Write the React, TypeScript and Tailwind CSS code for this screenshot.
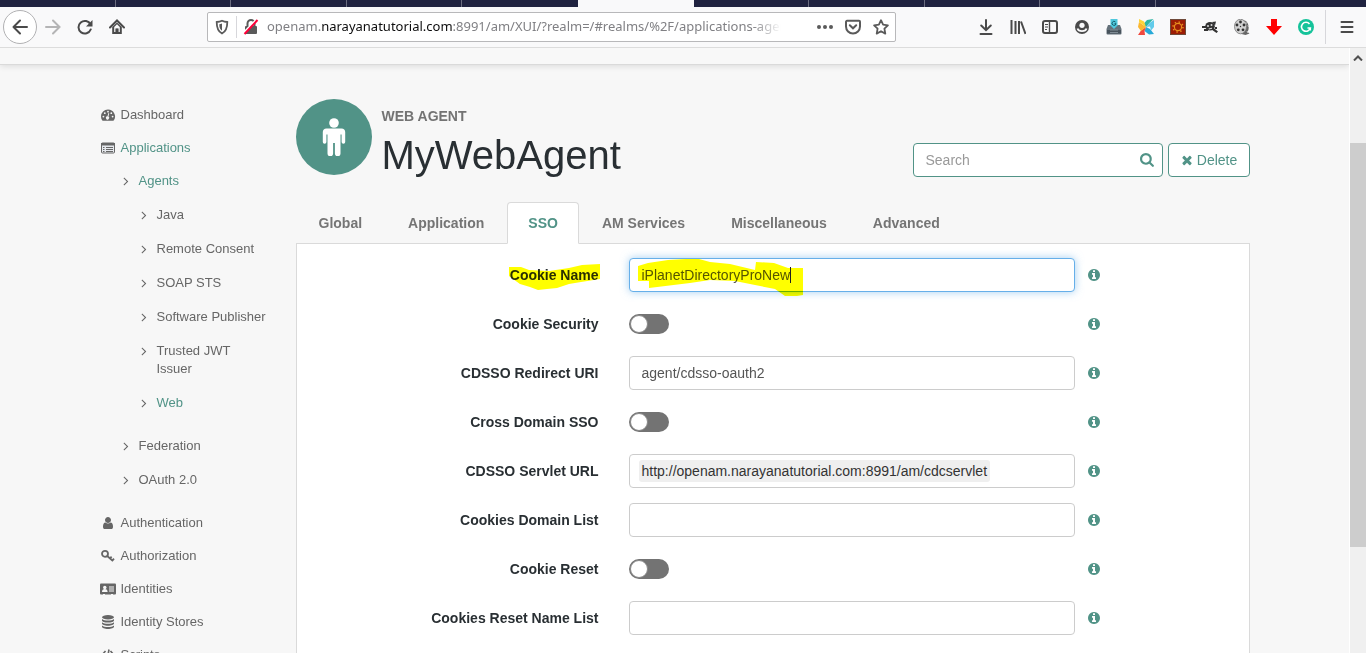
import { useState } from 'react';
import type { ReactNode } from 'react';

const FA: Record<string, string> = {
  angle:
    'M1171 960q0 13-10 23l-466 466q-10 10-23 10t-23-10l-50-50q-10-10-10-23t10-23l393-393-393-393q-10-10-10-23t10-23l50-50q10-10 23-10t23 10l466 466q10 10 10 23z',
  search:
    'M1152 704q0-185-131.5-316.5t-316.5-131.5-316.5 131.5-131.5 316.5 131.5 316.5 316.5 131.5 316.5-131.5 131.5-316.5zm512 832q0 53-37.5 90.5t-90.5 37.5q-54 0-90-38l-343-342q-179 124-399 124-143 0-273.5-55.5t-225-150-150-225-55.5-273.5 55.5-273.5 150-225 225-150 273.5-55.5 273.5 55.5 225 150 150 225 55.5 273.5q0 220-124 399l343 343q37 37 37 90z',
  times:
    'M1490 1322q0 40-28 68l-136 136q-28 28-68 28t-68-28l-294-294-294 294q-28 28-68 28t-68-28l-136-136q-28-28-28-68t28-68l294-294-294-294q-28-28-28-68t28-68l136-136q28-28 68-28t68 28l294 294 294-294q28-28 68-28t68 28l136 136q28 28 28 68t-28 68l-294 294 294 294q28 28 28 68z',
  info: 'M1152 1376v-160q0-14-9-23t-23-9h-96v-512q0-14-9-23t-23-9h-320q-14 0-23 9t-9 23v160q0 14 9 23t23 9h96v320h-96q-14 0-23 9t-9 23v160q0 14 9 23t23 9h448q14 0 23-9t9-23zm-128-896v-160q0-14-9-23t-23-9h-192q-14 0-23 9t-9 23v160q0 14 9 23t23 9h192q14 0 23-9t9-23zm640 416q0 209-103 385.5t-279.5 279.5-385.5 103-385.5-103-279.5-279.5-103-385.5 103-385.5 279.5-279.5 385.5-103 385.5 103 279.5 279.5 103 385.5z',
  user: 'M1536 1399q0 109-62.5 187t-150.5 78h-854q-88 0-150.5-78t-62.5-187q0-85 8.5-160.5t31.5-152 58.5-131 94-89 134.5-34.5q131 128 313 128t313-128q76 0 134.5 34.5t94 89 58.5 131 31.5 152 8.5 160.5zm-256-887q0 159-112.5 271.5t-271.5 112.5-271.5-112.5-112.5-271.5 112.5-271.5 271.5-112.5 271.5 112.5 112.5 271.5z',
};

function Fa({ name, className }: { name: string; className: string }) {
  return (
    <svg viewBox="0 0 1792 1792" fill="currentColor" className={className} aria-hidden="true">
      <path d={FA[name]} />
    </svg>
  );
}

const navIcons: Record<string, ReactNode> = {
  dashboard: (
    <>
      <path fill="currentColor" d="M8 2.5A7 7 0 0 0 1 9.500c0 1.400.4 2.700 1.100 3.800.2.300.4.400.7.400h10.400c.3 0 .5-.1.700-.4A7 7 0 0 0 8 2.500z" />
      <g fill="#f7f7f7">
        <circle cx="3.400" cy="9.600" r=".9" />
        <circle cx="4.800" cy="6.200" r=".9" />
        <circle cx="8" cy="4.700" r=".9" />
        <circle cx="11.300" cy="6.200" r=".9" />
        <circle cx="12.600" cy="9.600" r=".9" />
        <path d="M9.200 6.300l-.7 3.300a1.600 1.600 0 1 1-1-.3l.9-3.300z" />
      </g>
    </>
  ),
  list: (
    <>
      <rect x="1.500" y="3" width="13" height="10" rx="1" fill="#e6e9ee" stroke="currentColor" />
      <path d="M1 3h14v2.500H1z" fill="currentColor" />
      <path d="M3 7.500h1.500M6 7.500h7M3 9.500h1.500M6 9.500h7M3 11.500h1.500M6 11.500h7" stroke="currentColor" />
    </>
  ),
  user: (
    <svg viewBox="0 0 1792 1792" x="1" y="1" width="14" height="14">
      <path d={FA.user} fill="currentColor" />
    </svg>
  ),
  key: (
    <g fill="none" stroke="currentColor" strokeWidth="1.800">
      <circle cx="5" cy="5.800" r="3" />
      <path d="M7.200 8l5.800 5M10 10.500l1.600-1.800M12.300 12.600l1.700-1.900" />
    </g>
  ),
  card: (
    <>
      <rect x="0" y="2.500" width="16" height="11" rx="1" fill="currentColor" />
      <g fill="#f7f7f7">
        <circle cx="4.800" cy="6.500" r="1.700" />
        <path d="M2 11c0-2 1-3 2.800-3s2.800 1 2.800 3zM9 5.500h5v1H9zM9 7.500h5v1H9zM9 9.500h5v1H9z" />
        <path d="M3 13h2v1H3zM11 13h2v1h-2z" />
      </g>
    </>
  ),
  database: (
    <g fill="currentColor">
      <ellipse cx="8" cy="3.300" rx="6" ry="2.200" />
      <path d="M2 5c1.200 1.200 3.500 1.600 6 1.600s4.800-.4 6-1.600v1.400c0 1.200-2.700 2.200-6 2.200s-6-1-6-2.200z" />
      <path d="M2 8.200c1.200 1.200 3.500 1.600 6 1.600s4.800-.4 6-1.600v1.400c0 1.200-2.700 2.200-6 2.200s-6-1-6-2.200z" />
      <path d="M2 11.400c1.200 1.200 3.500 1.600 6 1.600s4.800-.4 6-1.600v1.400c0 1.200-2.700 2.200-6 2.200s-6-1-6-2.200z" />
    </g>
  ),
  code: <path d="M5.500 4L2 8l3.500 4M10.500 4L14 8l-3.500 4M9 2.500L7 13.500" fill="none" stroke="currentColor" strokeWidth="1.600" />,
};

function NavItem({ icon, label, active }: { icon: string; label: string; active?: boolean }) {
  return (
    <a href="#" className="flex items-center gap-[5px] pt-[8px] pb-[7px]">
      <svg viewBox="0 0 16 16" className="size-4 shrink-0 text-[#666]" aria-hidden="true">
        {navIcons[icon]}
      </svg>
      <span className={active ? 'text-[#519387]' : ''}>{label}</span>
    </a>
  );
}

function SubItem({ label, active }: { label: string; active?: boolean }) {
  return (
    <a href="#" className="flex items-start gap-[6px] py-2">
      <Fa name="angle" className="mt-[2px] size-[14px] shrink-0" />
      <span className={active ? 'text-[#519387]' : ''}>{label}</span>
    </a>
  );
}

function Sidebar() {
  return (
    <nav className="w-[196px] shrink-0 pt-[33px] pr-6 text-[13px] leading-[18px] text-[#666]">
      <NavItem icon="dashboard" label="Dashboard" />
      <NavItem icon="list" label="Applications" active />
      <div className="pb-[9px] pl-[19px]">
        <SubItem label="Agents" active />
        <div className="pb-[9px] pl-[18px]">
          <SubItem label="Java" />
          <SubItem label="Remote Consent" />
          <SubItem label="SOAP STS" />
          <SubItem label="Software Publisher" />
          <div className="pr-6">
            <SubItem label="Trusted JWT Issuer" />
          </div>
          <SubItem label="Web" active />
        </div>
        <SubItem label="Federation" />
        <SubItem label="OAuth 2.0" />
      </div>
      <NavItem icon="user" label="Authentication" />
      <NavItem icon="key" label="Authorization" />
      <NavItem icon="card" label="Identities" />
      <NavItem icon="database" label="Identity Stores" />
      <NavItem icon="code" label="Scripts" />
    </nav>
  );
}

function ToolButton({ label, children }: { label: string; children: ReactNode }) {
  return (
    <button type="button" aria-label={label} className="flex h-8 w-8 shrink-0 items-center justify-center">
      <svg viewBox="0 0 16 16" className="size-4" fill="none" stroke="#4a4a4a" strokeWidth="2">
        {children}
      </svg>
    </button>
  );
}

function BrowserToolbar() {
  return (
    <div className="flex h-[41px] shrink-0 items-center border-b border-[#dcdcdc] bg-[#f9f9fa] pr-[3px] pl-[3px]">
      <button
        type="button"
        aria-label="Back"
        className="flex size-[34px] shrink-0 items-center justify-center rounded-full border border-[#b1b1b3] bg-white"
      >
        <svg viewBox="0 0 16 16" className="size-4" fill="none" stroke="#4a4a4a" strokeWidth="2" strokeLinecap="round" strokeLinejoin="round">
          <path d="M15 8H1.500M8 1.500L1.500 8 8 14.500" />
        </svg>
      </button>
      <ToolButton label="Forward">
        <path d="M1 8h13.500M8 1.500L14.500 8 8 14.500" stroke="#b4b4b5" strokeLinecap="round" />
      </ToolButton>
      <ToolButton label="Reload">
        <path d="M13.500 5.500A6.300 6.300 0 1 0 13.700 10.500" strokeLinecap="round" />
        <path d="M15.500 1v6.500H9z" fill="#4a4a4a" stroke="none" />
      </ToolButton>
      <ToolButton label="Home">
        <path d="M1 8.500L8 1.500l7 7" strokeLinecap="round" />
        <path d="M3.200 8v7h9.600V8L8 3.500z" fill="#4a4a4a" stroke="none" />
        <path d="M5.200 8L8 5.200l2.800 2.800V13H9.600v-3.500H6.400V13H5.200z" fill="#f9f9fa" stroke="none" />
        <path d="M7 9.800h2V13H7z" fill="#4a4a4a" stroke="none" />
      </ToolButton>

      <div className="mr-[74px] ml-[74px] flex h-[30px] min-w-0 flex-1 items-center rounded-[2px] border border-[#b8b8ba] bg-white pr-[6px] pl-[6px]">
        <svg viewBox="0 0 16 16" className="size-4 shrink-0" aria-hidden="true">
          <path d="M8 1.700c-2 .9-3.800 1.200-5.300 1.300 0 5.500.8 9.300 5.300 11.500 4.500-2.200 5.300-6 5.300-11.500C11.800 2.900 10 2.600 8 1.700z" fill="none" stroke="#5a5a5a" strokeWidth="1.800" />
          <path d="M8 4.500c-1 .4-1.700.6-2.700.7 0 3.500.6 5 2.700 6.500z" fill="#5a5a5a" />
        </svg>
        <span className="mx-[6px] h-[22px] w-px bg-[#d7d7db]" />
        <svg viewBox="0 0 16 16" className="size-4 shrink-0" aria-hidden="true">
          <path d="M4.500 7V4.500a3.500 3.500 0 0 1 7 0V7" fill="none" stroke="#5a5a5a" strokeWidth="2" />
          <rect x="2" y="7" width="12" height="8" rx="1" fill="#5a5a5a" />
          <path d="M0 14.500L13.500.5" stroke="#fff" strokeWidth="2" />
          <path d="M1.500 15L14.500 1" stroke="#ff0039" strokeWidth="2" />
        </svg>
        <a
          href="#"
          className="ml-2 w-[518px] overflow-hidden [mask-image:linear-gradient(to_right,black_485px,transparent_514px)] font-['Noto_Sans',sans-serif] text-[13px] whitespace-nowrap text-[#808084]"
        >
          openam.<span className="text-[#0c0c0d]">narayanatutorial.com</span>:8991/am/XUI/?realm=/#realms/%2F/applications-agents-web
        </a>
        <div className="ml-auto flex shrink-0 items-center gap-3">
          <svg viewBox="0 0 16 16" className="size-4" fill="#5a5a5a" aria-hidden="true">
            <circle cx="2" cy="8" r="2" />
            <circle cx="8" cy="8" r="2" />
            <circle cx="14" cy="8" r="2" />
          </svg>
          <svg viewBox="0 0 16 16" className="size-4" fill="none" stroke="#5a5a5a" strokeWidth="2" aria-hidden="true">
            <path d="M2 1.800h12a1 1 0 0 1 1 1V7.500a7 7 0 0 1-14 0V2.800a1 1 0 0 1 1-1z" />
            <path d="M4.800 6.300L8 9.300l3.200-3" strokeLinecap="round" />
          </svg>
          <svg viewBox="0 0 16 16" className="size-4" fill="none" stroke="#5a5a5a" strokeWidth="1.800" strokeLinejoin="round" aria-hidden="true">
            <path d="M8 1.200l2.100 4.500 4.800.6-3.500 3.400.9 4.900L8 12.200l-4.300 2.400.9-4.900L1.100 6.300l4.800-.6z" />
          </svg>
        </div>
      </div>

      <ToolButton label="Downloads">
        <path d="M8 1v10M3.200 6.500L8 11.200l4.800-4.700M2.500 15h11" strokeLinecap="round" />
      </ToolButton>
      <ToolButton label="Library">
        <path d="M1.500 1v14M5.500 2v13M9 2v13M11 2.500l4.500 12.500" />
      </ToolButton>
      <ToolButton label="Sidebars">
        <rect x="1" y="2" width="14" height="12" rx="2" />
        <path d="M7.500 2v12" strokeWidth="1.400" />
        <path d="M3 5.500h3M3 8h3M3 10.500h2" strokeWidth="1" />
      </ToolButton>
      <ToolButton label="Account">
        <circle cx="8" cy="8" r="7" fill="#4a4a4a" stroke="none" />
        <circle cx="8" cy="6.300" r="2.600" fill="#f9f9fa" stroke="none" />
        <path d="M3.500 9.500c1 3.500 8 3.500 9 0" stroke="#f9f9fa" strokeWidth="1.800" />
      </ToolButton>
      <ToolButton label="Capture">
        <g stroke="none">
          <path d="M2 6h12l1.500 4v4.500a1 1 0 0 1-1 1h-13a1 1 0 0 1-1-1V10z" fill="#65717a" />
          <path d="M1 11h14v3.500H1z" fill="#47525b" />
          <path d="M4 10.500h8v1H4zM4 13h8v1H4z" fill="#7f8b94" />
          <path d="M4.500 0h7v6.500L8 10 4.500 6.500z" fill="#4fc8dd" />
        </g>
        <path d="M9.500 3a2 2 0 1 0 .5 1.700H8.500" stroke="#17616f" strokeWidth="1" />
      </ToolButton>
      <ToolButton label="Pinwheel">
        <g stroke="none">
          <path d="M5 5.500L9 1l6.500-1-4 4L8 8z" fill="#2fb5a5" />
          <path d="M8 8l3.500-4 4.500-3v7l-3 3.500-1-4z" fill="#62cbea" />
          <path d="M8 8l4 2 4 5-5 .5L6.500 12z" fill="#27a9d8" />
          <path d="M8 8L6.500 12 7 16H0l3-4.500z" fill="#f0483e" />
          <path d="M8 8l-5 4L0 8l1-5z" fill="#fbb731" />
          <path d="M8 8L1 3V0l5 2.500z" fill="#fdd53a" />
        </g>
      </ToolButton>
      <ToolButton label="Settings gear">
        <rect x=".5" y=".5" width="15" height="15" fill="#9c1c05" stroke="#6f4a3a" strokeWidth="1" />
        <circle cx="8" cy="8" r="3.600" stroke="#e8901f" strokeWidth="1.200" />
        <circle cx="8" cy="8" r="5" stroke="#e8901f" strokeWidth="1.500" strokeDasharray="1.400 2.527" />
      </ToolButton>
      <ToolButton label="Debugger">
        <g stroke="none" fill="#333">
          <ellipse cx="8" cy="7.300" rx="4.800" ry="4.300" />
          <path d="M0 7h4v2H0zM2 10h4v2H2zM10 3l4-.5-1 4zM11 8.500l5 4-1.500 1.500-5-3.500zM13 8h2v2h-2z" />
          <g fill="#ddd">
            <circle cx="6" cy="7" r="1" />
            <circle cx="9.500" cy="6" r="1" />
            <path d="M6.500 9.500l3.500-.8v1l-3 .8z" />
          </g>
        </g>
      </ToolButton>
      <ToolButton label="Film reel">
        <g stroke="none">
          <path d="M7 .5l5 1.500c3 3 3.500 8 1.500 11l2 1.500-4 1.500-4-1z" fill="#666" />
          <ellipse cx="6.500" cy="7.500" rx="6" ry="7.300" fill="#d0d0d0" stroke="#777" strokeWidth=".8" />
          <g fill="#333">
            <circle cx="6.500" cy="3" r="1.400" />
            <circle cx="3" cy="6" r="1.400" />
            <circle cx="10" cy="6" r="1.400" />
            <circle cx="4.300" cy="10.800" r="1.400" />
            <circle cx="9" cy="10.800" r="1.400" />
            <circle cx="6.500" cy="7.500" r=".7" />
          </g>
          <path d="M12 3v2M14 6l.5 2M13 12l1 2" stroke="#ccc" strokeWidth="1" />
        </g>
      </ToolButton>
      <ToolButton label="Download helper">
        <path d="M5 0h6v7h5l-8 9-8-9h5z" fill="#f00" stroke="none" />
      </ToolButton>
      <ToolButton label="Grammar">
        <circle cx="8" cy="8" r="8" fill="#15c39a" stroke="none" />
        <path d="M11.500 5A4.500 4.500 0 1 0 12.300 9H9.500M12.300 9v2.500" stroke="#fff" strokeWidth="1.600" />
      </ToolButton>
      <span className="mr-[5px] ml-[3px] h-[34px] w-px shrink-0 bg-[#d7d7db]" />
      <ToolButton label="Menu">
        <path d="M2.500 3h11M2.500 8h11M2.500 13h11" strokeLinecap="round" />
      </ToolButton>
    </div>
  );
}

function TabStrip() {
  return (
    <div className="h-[7px] shrink-0 bg-[#202340]">
      <div className="grid h-full w-[1156px] grid-cols-10">
        {Array.from({ length: 10 }, (_, i) => (
          <div key={i} className={i === 5 ? 'bg-[#f9f9fa]' : i === 4 ? '' : 'border-r border-[#6b6d80]'} />
        ))}
      </div>
    </div>
  );
}

function PageHeader() {
  return (
    <header className="flex h-[76px] items-start">
      <div className="flex size-[76px] shrink-0 items-center justify-center rounded-full bg-[#519387]">
        <svg viewBox="0 0 24 38" className="h-[38px] w-6" fill="#fff" aria-hidden="true">
          <circle cx="12" cy="5" r="4.800" />
          <path d="M4.500 10.500h15A3.700 3.700 0 0 1 23.200 14v10a1.800 1.800 0 0 1-3.600 0v-7.500H18.500V35.500a2.500 2.500 0 0 1-5.600 0V25h-1.800v10.500a2.500 2.500 0 0 1-5.600 0V16.500H4.400V24a1.800 1.800 0 0 1-3.600 0V14a3.700 3.700 0 0 1 3.700-3.500z" />
        </svg>
      </div>
      <div className="ml-[10px] pt-2">
        <div className="text-sm leading-[18px] font-bold text-[#737373]">WEB AGENT</div>
        <h1 className="text-[40px] leading-[60px] text-[#292f33]">MyWebAgent</h1>
      </div>
      <div className="ml-auto flex gap-[5px] pt-11">
        <label className="flex h-[34px] w-[250px] items-center rounded border border-[#519387] bg-white pr-[7px] pl-3">
          <input
            type="search"
            placeholder="Search"
            aria-label="Search"
            className="min-w-0 flex-1 text-sm outline-none placeholder:text-[#999]"
          />
          <Fa name="search" className="size-[15px] text-[#519387]" />
        </label>
        <button
          type="button"
          className="flex h-[34px] w-[82px] items-center justify-center gap-[3px] rounded border border-[#519387] bg-white text-sm text-[#519387]"
        >
          <Fa name="times" className="size-[14px]" />
          Delete
        </button>
      </div>
    </header>
  );
}

const tabs = ['Global', 'Application', 'SSO', 'AM Services', 'Miscellaneous', 'Advanced'];

function Tabs({ current, onChange }: { current: string; onChange: (tab: string) => void }) {
  return (
    <div role="tablist" className="mt-[27px] -mb-px flex">
      {tabs.map((tab) => (
        <button
          key={tab}
          type="button"
          role="tab"
          aria-selected={tab === current}
          onClick={() => onChange(tab)}
          className={`h-[42px] rounded-t border text-sm font-bold ${
            tab === current
              ? 'border-[#dadada] border-b-white bg-white px-5 text-[#519387]'
              : 'border-transparent px-[22px] text-[#757575]'
          }`}
        >
          {tab}
        </button>
      ))}
    </div>
  );
}

function Row({ id, label, marker, children }: { id: string; label: string; marker?: ReactNode; children: ReactNode }) {
  return (
    <div className="flex h-[34px] items-center">
      <div className="relative mr-[30px] w-[302px] shrink-0 text-right">
        <label htmlFor={id} className="text-sm font-bold text-[#292f33]">
          {label}
        </label>
        {marker}
      </div>
      <div className="relative flex min-w-0 flex-1 items-center">{children}</div>
      <div className="flex w-[174px] shrink-0 pl-3">
        <button type="button" aria-label={`About ${label}`}>
          <Fa name="info" className="size-[14px] text-[#519387]" />
        </button>
      </div>
    </div>
  );
}

const fieldClass = 'h-[34px] w-full rounded border border-[#ccc] bg-white px-3 text-sm text-[#555] outline-none';

function Toggle({ id }: { id: string }) {
  return (
    <input
      id={id}
      type="checkbox"
      role="switch"
      className="h-5 w-10 appearance-none rounded-full bg-[#737373] p-px before:block before:size-[18px] before:rounded-full before:border before:border-[#888] before:bg-white checked:bg-[#519387] checked:before:ml-auto"
    />
  );
}

function SsoForm() {
  return (
    <form className="flex flex-col gap-[15px] border border-[#dadada] bg-white pt-[14px] pb-10">
      <Row
        id="cookie-name"
        label="Cookie Name"
        marker={
          <svg viewBox="0 0 94 28" className="pointer-events-none absolute top-[-1px] right-[-1px] h-7 w-[94px] mix-blend-multiply" aria-hidden="true">
            <path d="M3 5l12 0 8 3 20 1 20-3 13-3 18-1v15l-19 3-12 2-12 4-10 1-9 1-8-3-10-3-7-5-4-3z" fill="#ff0" />
          </svg>
        }
      >
        <input
          id="cookie-name"
          defaultValue="iPlanetDirectoryProNew"
          className="h-[34px] w-full rounded border border-[#66afe9] bg-white px-3 text-sm text-[#555] shadow-[0_0_8px_rgba(102,175,233,0.6)] outline-none"
        />
        <svg viewBox="0 0 170 40" className="pointer-events-none absolute top-0 left-[6px] h-10 w-[170px] mix-blend-multiply" aria-hidden="true">
          <path d="M3 8l10-3 20-3 18-1 13 0 11 3 20 2 25 6 1-8 18 1 14 5h15v27l-6 1h-12l-10-7-20-4-20-4-25-1-20 3-41 5v-7H3z" fill="#ff0" />
          <path d="M155.500 9v16" stroke="#222" />
        </svg>
      </Row>
      <Row id="cookie-security" label="Cookie Security">
        <Toggle id="cookie-security" />
      </Row>
      <Row id="redirect-uri" label="CDSSO Redirect URI">
        <input id="redirect-uri" defaultValue="agent/cdsso-oauth2" className={fieldClass} />
      </Row>
      <Row id="cross-domain" label="Cross Domain SSO">
        <Toggle id="cross-domain" />
      </Row>
      <Row id="servlet-url" label="CDSSO Servlet URL">
        <div className="flex h-[34px] w-full items-center rounded border border-[#ccc] bg-white px-[9px] text-sm text-[#333]">
          <span className="rounded-[3px] bg-[#efefef] px-[3px] py-px">
            http://openam.narayanatutorial.com:8991/am/cdcservlet
          </span>
          <input id="servlet-url" className="min-w-0 flex-1 outline-none" />
        </div>
      </Row>
      <Row id="domain-list" label="Cookies Domain List">
        <input id="domain-list" className={fieldClass} />
      </Row>
      <Row id="cookie-reset" label="Cookie Reset">
        <Toggle id="cookie-reset" />
      </Row>
      <Row id="reset-names" label="Cookies Reset Name List">
        <input id="reset-names" className={fieldClass} />
      </Row>
    </form>
  );
}

function Scrollbar() {
  return (
    <div className="flex w-[17px] shrink-0 flex-col border-l border-white bg-[#f0f0f0]" aria-hidden="true">
      <div className="flex h-[19px] items-center justify-center">
        <svg viewBox="0 0 10 6" className="h-[6px] w-[10px]" fill="none" stroke="#505050" strokeWidth="2">
          <path d="M1 5.500L5 1.500l4 4" />
        </svg>
      </div>
      <div className="flex-[76] pt-[76px]">
        <div className="h-full bg-[#cdcdcd]" />
      </div>
      <div className="flex-[20]" />
    </div>
  );
}

export default function App() {
  const [tab, setTab] = useState('SSO');

  return (
    <div className="flex h-screen flex-col overflow-hidden bg-[#f7f7f7] font-['Liberation_Sans',Arial,sans-serif]">
      <TabStrip />
      <BrowserToolbar />
      <div className="flex min-h-0 flex-1">
        <div className="min-w-0 flex-1 overflow-hidden">
          <div className="h-[17px] border-b border-[#dadada] bg-[#f8f8f8] shadow-[0_1px_6px_rgba(0,0,0,0.12)]" />
          <div className="mx-auto flex max-w-[1150px]">
            <Sidebar />
            <main className="min-w-0 flex-1 pt-[34px]">
              <PageHeader />
              <Tabs current={tab} onChange={setTab} />
              <SsoForm />
            </main>
          </div>
        </div>
        <Scrollbar />
      </div>
    </div>
  );
}
